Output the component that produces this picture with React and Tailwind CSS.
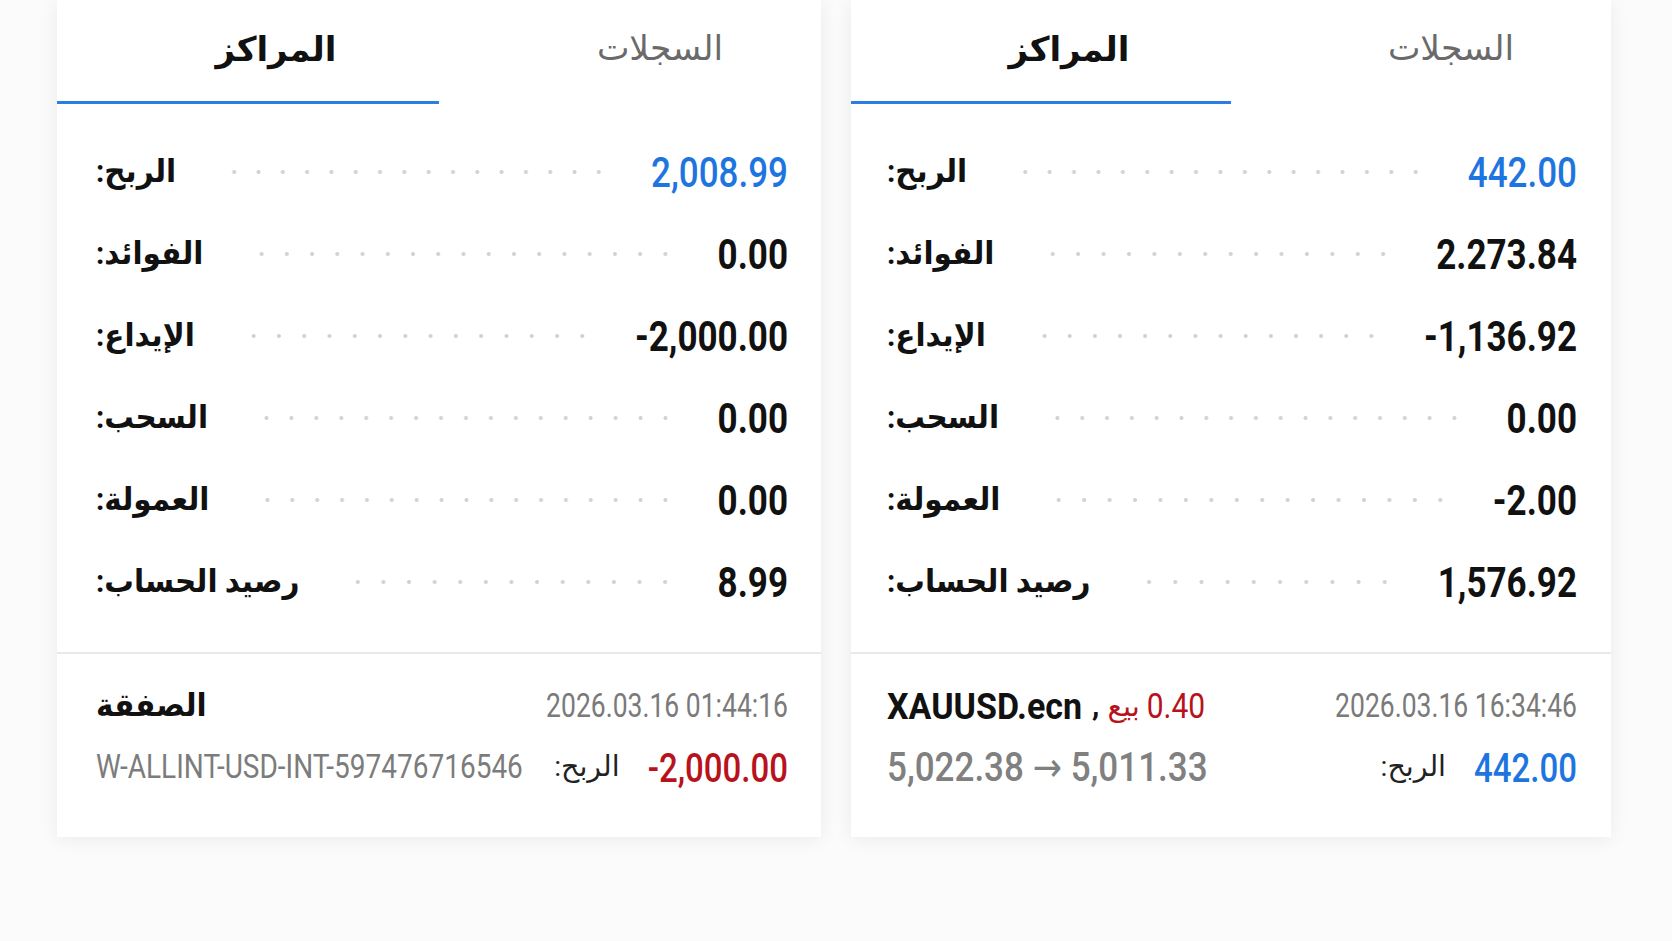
import React from "react";

function Row({ label, value, valueClass }) {
  return (
    <div className="flex h-[82px] items-center">
      <span dir="rtl" className="inline-block scale-y-[1.08] text-[29.5px] font-bold leading-none text-[#111]">
        {label}
      </span>
      <div className="ml-[46px] mr-[40px] h-[4px] flex-1 bg-[radial-gradient(circle,#d3d3d3_1.7px,transparent_2.3px)] bg-size-[25px_4px] bg-repeat-round" />
      <span className={valueClass}>{value}</span>
    </div>
  );
}

const valBlack = "inline-block scale-y-[1.22] text-[35px] font-bold leading-none text-[#111]";
const valBlue = "inline-block scale-y-[1.22] text-[35px] font-medium leading-none text-[#1f75e0]";

function Tabs() {
  return (
    <div className="grid h-[104px] grid-cols-2">
      <div className="flex items-center justify-center border-b-[3px] border-[#2b7de3] pb-[4px] pl-[56px]">
        <span className="text-[34px] font-bold leading-none text-[#111]">المراكز</span>
      </div>
      <div className="flex items-center justify-center pb-[7px] pl-[60px]">
        <span className="text-[34.5px] font-medium leading-none text-[#6a6a6a]">السجلات</span>
      </div>
    </div>
  );
}

function Panel({ width, padL, padR, rows, bottom }) {
  return (
    <div className={`flex flex-col bg-white shadow-[0_2px_18px_rgba(0,0,0,0.07)] ${width}`}>
      <Tabs />
      <div className={`pb-[29px] pt-[27px] ${padL} ${padR}`}>
        {rows.map((r) => (
          <Row key={r.label} label={r.label} value={r.value} valueClass={r.cls} />
        ))}
      </div>
      <div className={`border-t-2 border-[#e9e9e9] pb-[52px] pt-[34px] ${padL} ${padR}`}>{bottom}</div>
    </div>
  );
}

export default function App() {
  const leftRows = [
    { label: "الربح:", value: "2,008.99", cls: valBlue },
    { label: "الفوائد:", value: "0.00", cls: valBlack },
    { label: "الإيداع:", value: "-2,000.00", cls: valBlack },
    { label: "السحب:", value: "0.00", cls: valBlack },
    { label: "العمولة:", value: "0.00", cls: valBlack },
    { label: "رصيد الحساب:", value: "8.99", cls: valBlack },
  ];
  const rightRows = [
    { label: "الربح:", value: "442.00", cls: valBlue },
    { label: "الفوائد:", value: "2.273.84", cls: valBlack },
    { label: "الإيداع:", value: "-1,136.92", cls: valBlack },
    { label: "السحب:", value: "0.00", cls: valBlack },
    { label: "العمولة:", value: "-2.00", cls: valBlack },
    { label: "رصيد الحساب:", value: "1,576.92", cls: valBlack },
  ];

  const leftBottom = (
    <>
      <div className="flex h-[36px] items-center justify-between">
        <span dir="rtl" className="inline-block scale-y-[1.08] text-[29.5px] font-bold leading-none text-[#111]">
          الصفقة
        </span>
        <span className="inline-block scale-y-[1.22] text-[26.5px] leading-none text-[#7a7a7a]">
          2026.03.16 01:44:16
        </span>
      </div>
      <div className="mt-[25px] flex h-[36px] items-center justify-between">
        <span className="inline-block scale-y-[1.2] text-[28px] leading-none text-[#7c7c7c]">
          W-ALLINT-USD-INT-597476716546
        </span>
        <div className="flex items-center">
          <span dir="rtl" className="text-[28.5px] leading-none text-[#222]">
            الربح:
          </span>
          <span className="ml-[28px] inline-block scale-y-[1.22] text-[33px] font-medium leading-none text-[#b8121c]">
            -2,000.00
          </span>
        </div>
      </div>
    </>
  );

  const rightBottom = (
    <>
      <div className="flex h-[36px] items-center justify-between">
        <div className="flex items-center">
          <span className="inline-block scale-y-[1.1] text-[34px] font-bold leading-none text-[#111]">XAUUSD.ecn</span>
          <span className="ml-[10px] text-[30px] font-bold leading-none text-[#111]">,</span>
          <span dir="rtl" className="ml-[8px] text-[29px] leading-none text-[#b8121c]">
            بيع
          </span>
          <span className="ml-[7px] inline-block scale-y-[1.15] text-[30px] leading-none text-[#b8121c]">
            0.40
          </span>
        </div>
        <span className="inline-block scale-y-[1.22] text-[26.5px] leading-none text-[#7a7a7a]">
          2026.03.16 16:34:46
        </span>
      </div>
      <div className="mt-[25px] flex h-[36px] items-center justify-between">
        <span className="inline-block scale-y-[1.15] text-[35px] font-medium leading-none text-[#808080]">
          5,022.38 → 5,011.33
        </span>
        <div className="flex items-center">
          <span dir="rtl" className="text-[28.5px] leading-none text-[#222]">
            الربح:
          </span>
          <span className="ml-[28px] inline-block scale-y-[1.25] text-[33px] font-medium leading-none text-[#1f75e0]">
            442.00
          </span>
        </div>
      </div>
    </>
  );

  return (
    <div className="min-h-screen w-full bg-[#fbfbfb] font-['Roboto','DejaVu_Sans',sans-serif]">
      <div className="flex items-start gap-[30px] pl-[57px]">
        <Panel width="w-[764px]" padL="pl-[39px]" padR="pr-[33px]" rows={leftRows} bottom={leftBottom} />
        <Panel width="w-[760px]" padL="pl-[36px]" padR="pr-[34px]" rows={rightRows} bottom={rightBottom} />
      </div>
    </div>
  );
}
